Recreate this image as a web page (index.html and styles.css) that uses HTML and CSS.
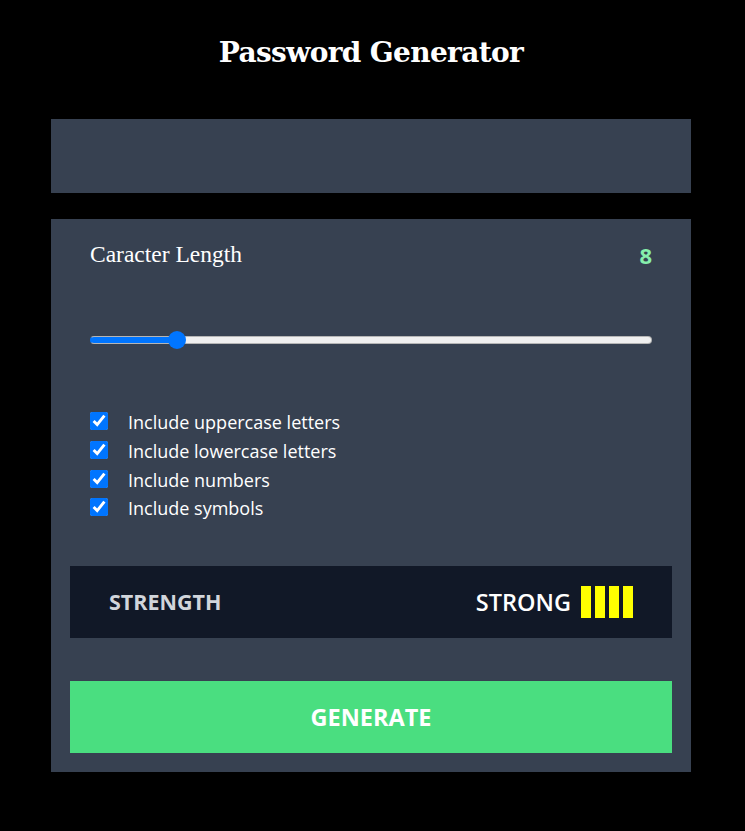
FILE: index.html
```html
<!DOCTYPE html>
<html lang="en">
<head>
<meta charset="utf-8">
<title>Password Generator</title>
<link rel="stylesheet" href="styles.css">
</head>
<body>
<main class="app">
  <h1 class="title">Password Generator</h1>
  <div class="output"></div>
  <section class="panel">
    <div class="length-row">
      <span class="length-label">Caracter Length</span>
      <span class="length-value">8</span>
    </div>
    <div class="slider-wrap">
      <input class="slider" type="range" min="4" max="32" value="8" style="--fill: 15.5%">
    </div>
    <ul class="options">
      <li class="option"><input type="checkbox" checked><span>Include uppercase letters</span></li>
      <li class="option"><input type="checkbox" checked><span>Include lowercase letters</span></li>
      <li class="option"><input type="checkbox" checked><span>Include numbers</span></li>
      <li class="option"><input type="checkbox" checked><span>Include symbols</span></li>
    </ul>
    <div class="strength">
      <span class="strength-label">STRENGTH</span>
      <div class="strength-result">
        <span class="strength-text">STRONG</span>
        <div class="bars">
          <span class="bar"></span><span class="bar"></span><span class="bar"></span><span class="bar"></span>
        </div>
      </div>
    </div>
    <button class="generate">GENERATE</button>
  </section>
</main>
</body>
</html>
```

FILE: styles.css
```css
* { box-sizing: border-box; }
html, body { margin: 0; padding: 0; background: #000; }
body {
  font-family: "Open Sans", "Noto Sans", sans-serif;
  color: #fff;
  padding-right: 3px;
}
.app {
  width: 640px;
  margin: 0 auto;
  padding-top: 35px;
  padding-bottom: 59px;
}
.title {
  margin: 0;
  text-align: center;
  font-family: "DejaVu Serif", "Liberation Serif", serif;
  font-weight: bold;
  font-size: 28px;
  line-height: 36px;
  letter-spacing: -0.65px;
}
.output {
  margin-top: 48px;
  height: 74px;
  background: #374151;
}
.panel {
  margin-top: 26px;
  background: #374151;
  padding: 20px 19px 19px 19px;
}
.length-row {
  display: flex;
  justify-content: space-between;
  align-items: center;
  padding: 0 20px;
  height: 30px;
}
.length-label {
  font-family: "Liberation Serif", serif;
  font-size: 23.5px;
}
.length-value {
  font-size: 22px;
  font-weight: bold;
  color: #86efac;
  font-family: "Open Sans", sans-serif;
  position: relative;
  top: 1px;
}
.slider-wrap {
  padding: 0 20px;
  margin-top: 61px;
  height: 20px;
  display: flex;
  align-items: center;
}
.slider {
  -webkit-appearance: none;
  appearance: none;
  width: 100%;
  margin: 0;
  height: 8px;
  border-radius: 4px;
  background: linear-gradient(to right, #0075ff 0, #0075ff var(--fill), #efefef var(--fill), #efefef 100%);
  border: 1px solid #b5b5b5;
  border-left-color: #0075ff;
}
.slider::-webkit-slider-thumb {
  -webkit-appearance: none;
  appearance: none;
  width: 18px;
  height: 18px;
  border-radius: 50%;
  background: #0075ff;
  border: none;
}
.options {
  list-style: none;
  margin: 58px 0 0 0;
  padding: 0 20px;
}
.option {
  display: flex;
  align-items: center;
  height: 28.7px;
  font-size: 18px;
}
.option input {
  width: 18px;
  height: 18px;
  margin: 0 20px 0 0;
  accent-color: #0075ff;
  position: relative;
  top: -1px;
}
.strength {
  margin-top: 43px;
  height: 72px;
  background: #111827;
  display: flex;
  align-items: center;
  justify-content: space-between;
  padding: 0 39px;
}
.strength-label {
  font-size: 21.5px;
  font-weight: bold;
  color: #d1d5db;
}
.strength-result {
  display: flex;
  align-items: center;
  gap: 10px;
}
.strength-text {
  font-size: 23.5px;
  font-weight: 600;
  color: #fff;
}
.bars {
  display: flex;
  gap: 4px;
}
.bar {
  width: 10px;
  height: 32px;
  background: #ffff00;
}
.generate {
  display: block;
  width: 100%;
  margin-top: 43px;
  height: 72px;
  border: none;
  background: #4ade80;
  color: #fff;
  font-family: "Open Sans", sans-serif;
  font-size: 23.5px;
  font-weight: bold;
  cursor: pointer;
}
```
